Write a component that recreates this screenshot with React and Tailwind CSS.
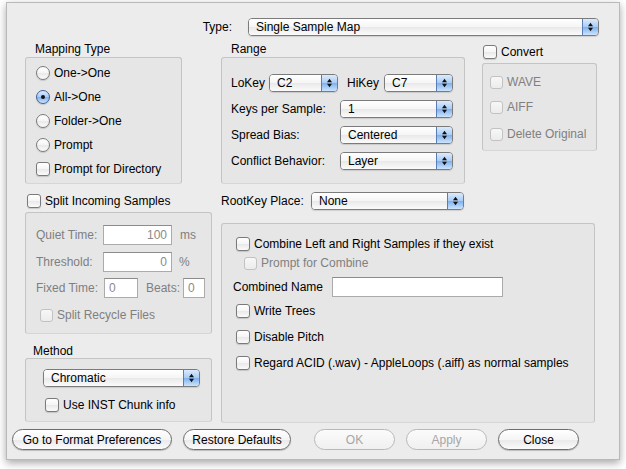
import React from "react";

const aquaWhite =
  "bg-[linear-gradient(to_bottom,#ffffff_0%,#f5f5f5_50%,#e9e9e9_52%,#fbfbfb_100%)]";
const aquaBlue =
  "bg-[linear-gradient(to_bottom,#dcebfd_0%,#a8cbf5_50%,#7eb1ee_52%,#cde4fd_100%)]";

function Arrows() {
  return (
    <svg width="5" height="10" viewBox="0 0 6 11">
      <polygon points="0,4.5 3,0.5 6,4.5" fill="#111" />
      <polygon points="0,6.5 3,10.5 6,6.5" fill="#111" />
    </svg>
  );
}

function Popup({ value, className }) {
  return (
    <div
      className={`flex h-[18px] shrink-0 overflow-hidden rounded-[4px] border border-[#7b7b7b] shadow-[0_1px_1px_rgba(0,0,0,0.12)] ${className}`}
    >
      <div className={`flex flex-1 items-center pl-[7px] leading-none ${aquaWhite}`}>{value}</div>
      <div
        className={`flex w-[16px] items-center justify-center border-l border-[#5a7db5] ${aquaBlue}`}
      >
        <Arrows />
      </div>
    </div>
  );
}

function Check({ label, disabled, className = "" }) {
  return (
    <div className={`flex h-[14px] items-center ${className}`}>
      <div
        className={
          disabled
            ? "h-[13px] w-[13px] shrink-0 rounded-[3px] border border-[#c2c2c2] bg-[linear-gradient(to_bottom,#f7f7f7,#ececec)]"
            : `h-[14px] w-[14px] shrink-0 rounded-[3px] border border-[#7a7a7a] shadow-[0_1px_1px_rgba(0,0,0,0.15)] ${aquaWhite}`
        }
      />
      <span className={`ml-[4px] whitespace-nowrap leading-none ${disabled ? "text-[#808080]" : ""}`}>
        {label}
      </span>
    </div>
  );
}

function Radio({ label, on }) {
  return (
    <div className="flex h-[24px] items-center">
      <div
        className={`flex h-[14px] w-[14px] items-center justify-center rounded-full border shadow-[0_1px_1px_rgba(0,0,0,0.15)] ${
          on ? `border-[#3e5f96] ${aquaBlue}` : `border-[#7a7a7a] ${aquaWhite}`
        }`}
      >
        {on && <div className="h-[4px] w-[4px] rounded-full bg-[#111]" />}
      </div>
      <span className="ml-[4px] leading-none">{label}</span>
    </div>
  );
}

function Field({ value, className }) {
  return (
    <div
      className={`flex h-[20px] shrink-0 items-center justify-end border border-[#ababab] border-t-[#8c8c8c] bg-white pr-[4px] text-[#8a8a8a] ${className}`}
    >
      {value}
    </div>
  );
}

function Button({ label, disabled, className }) {
  return (
    <div
      className={`flex h-[21px] shrink-0 items-center justify-center rounded-full border ${
        disabled
          ? "border-[#b9b9b9] bg-[linear-gradient(to_bottom,#fbfbfb,#f0f0f0)] text-[#a6a6a6]"
          : `border-[#6d6d6d] shadow-[0_1px_1px_rgba(0,0,0,0.2)] ${aquaWhite}`
      } ${className}`}
    >
      {label}
    </div>
  );
}

const box = "rounded-[3px] border border-[#c4c4c4] border-b-[#d6d6d6] bg-[#e6e6e6]";

export default function App() {
  return (
    <div className="h-[469px] w-[626px] overflow-hidden bg-white pl-[6px] pt-[2px] font-['Liberation_Sans',Arial,sans-serif] text-[12px] text-black">
      <div className="h-[458px] w-[614px] border border-[#b9b9b9] bg-[#ececec] shadow-[0_3px_8px_rgba(0,0,0,0.35)]">
        {/* type row */}
        <div className="mt-[15px] flex h-[18px] items-center">
          <span className="w-[225px] text-right">Type:</span>
          <Popup value="Single Sample Map" className="ml-[16px] w-[351px]" />
        </div>

        <div className="mt-[6px] flex">
          {/* left column */}
          <div className="ml-[18px] w-[187px]">
            <div className="flex h-[14px] items-center pl-[10px]">Mapping Type</div>
            <div className={`mt-[1px] h-[127px] w-[157px] pl-[10px] pt-[3px] ${box}`}>
              <Radio label="One->One" />
              <Radio label="All->One" on />
              <Radio label="Folder->One" />
              <Radio label="Prompt" />
              <div className="flex h-[24px] items-center">
                <Check label="Prompt for Directory" />
              </div>
            </div>

            <Check label="Split Incoming Samples" className="ml-[2px] mt-[10px]" />
            <div className={`mt-[4px] h-[122px] pl-[10px] pt-[12px] ${box}`}>
              <div className="flex h-[20px] items-center text-[#7f7f7f]">
                <span className="w-[67px]">Quiet Time:</span>
                <Field value="100" className="w-[69px]" />
                <span className="ml-[8px]">ms</span>
              </div>
              <div className="mt-[7px] flex h-[20px] items-center text-[#7f7f7f]">
                <span className="w-[67px]">Threshold:</span>
                <Field value="0" className="w-[69px]" />
                <span className="ml-[7px]">%</span>
              </div>
              <div className="mt-[6px] flex h-[20px] items-center text-[#7f7f7f]">
                <span className="w-[68px]">Fixed Time:</span>
                <Field value="0" className="w-[34px] !justify-start pl-[4px]" />
                <span className="ml-[8px]">Beats:</span>
                <Field value="0" className="ml-[3px] w-[22px] !justify-start pl-[4px]" />
              </div>
              <Check label="Split Recycle Files" disabled className="ml-[4px] mt-[10px]" />
            </div>

            <div className="mt-[10px] flex h-[14px] items-center pl-[8px]">Method</div>
            <div className={`h-[64px] pl-[17px] pt-[10px] ${box}`}>
              <Popup value="Chromatic" className="w-[157px]" />
              <Check label="Use INST Chunk info" className="ml-[2px] mt-[11px]" />
            </div>
          </div>

          {/* right column */}
          <div className="ml-[9px] w-[376px]">
            <div className="flex">
              <div className="w-[244px]">
                <div className="flex h-[14px] items-center pl-[10px]">Range</div>
                <div className={`mt-[1px] h-[127px] pl-[9px] pt-[16px] ${box}`}>
                  <div className="flex h-[18px] items-center">
                    <span className="w-[38px]">LoKey</span>
                    <Popup value="C2" className="w-[69px]" />
                    <span className="ml-[9px] w-[37px]">HiKey</span>
                    <Popup value="C7" className="w-[69px]" />
                  </div>
                  {[
                    ["Keys per Sample:", "1"],
                    ["Spread Bias:", "Centered"],
                    ["Conflict Behavior:", "Layer"],
                  ].map(([l, v]) => (
                    <div key={l} className="mt-[8px] flex h-[18px] items-center">
                      <span className="w-[109px]">{l}</span>
                      <Popup value={v} className="w-[113px]" />
                    </div>
                  ))}
                </div>
              </div>
              <div className="ml-[17px] w-[115px]">
                <Check label="Convert" className="ml-[1px] mt-[3px]" />
                <div className={`mt-[4px] h-[88px] pl-[7px] pt-[11px] ${box}`}>
                  <Check label="WAVE" disabled />
                  <Check label="AIFF" disabled className="mt-[11px]" />
                  <Check label="Delete Original" disabled className="mt-[13px]" />
                </div>
              </div>
            </div>

            <div className="mt-[8px] flex h-[18px] items-center">
              <span className="w-[90px]">RootKey Place:</span>
              <Popup value="None" className="w-[153px]" />
            </div>

            <div className={`mt-[13px] h-[200px] w-[374px] pl-[14px] pt-[13px] ${box}`}>
              <Check label="Combine Left and Right Samples if they exist" />
              <Check label="Prompt for Combine" disabled className="ml-[8px] mt-[5px]" />
              <div className="-ml-[3px] mt-[7px] flex h-[20px] items-center">
                <span className="w-[99px]">Combined Name</span>
                <Field value="" className="w-[171px]" />
              </div>
              <Check label="Write Trees" className="mt-[7px]" />
              <Check label="Disable Pitch" className="mt-[12px]" />
              <Check
                label="Regard ACID (.wav) - AppleLoops (.aiff) as normal samples"
                className="mt-[12px]"
              />
            </div>
          </div>
        </div>

        {/* buttons */}
        <div className="mt-[6px] flex pl-[5px]">
          <Button label="Go to Format Preferences" className="w-[160px]" />
          <Button label="Restore Defaults" className="ml-[11px] w-[108px]" />
          <Button label="OK" disabled className="ml-[23px] w-[81px]" />
          <Button label="Apply" disabled className="ml-[11px] w-[81px]" />
          <Button label="Close" className="ml-[11px] w-[81px]" />
        </div>
      </div>
    </div>
  );
}
